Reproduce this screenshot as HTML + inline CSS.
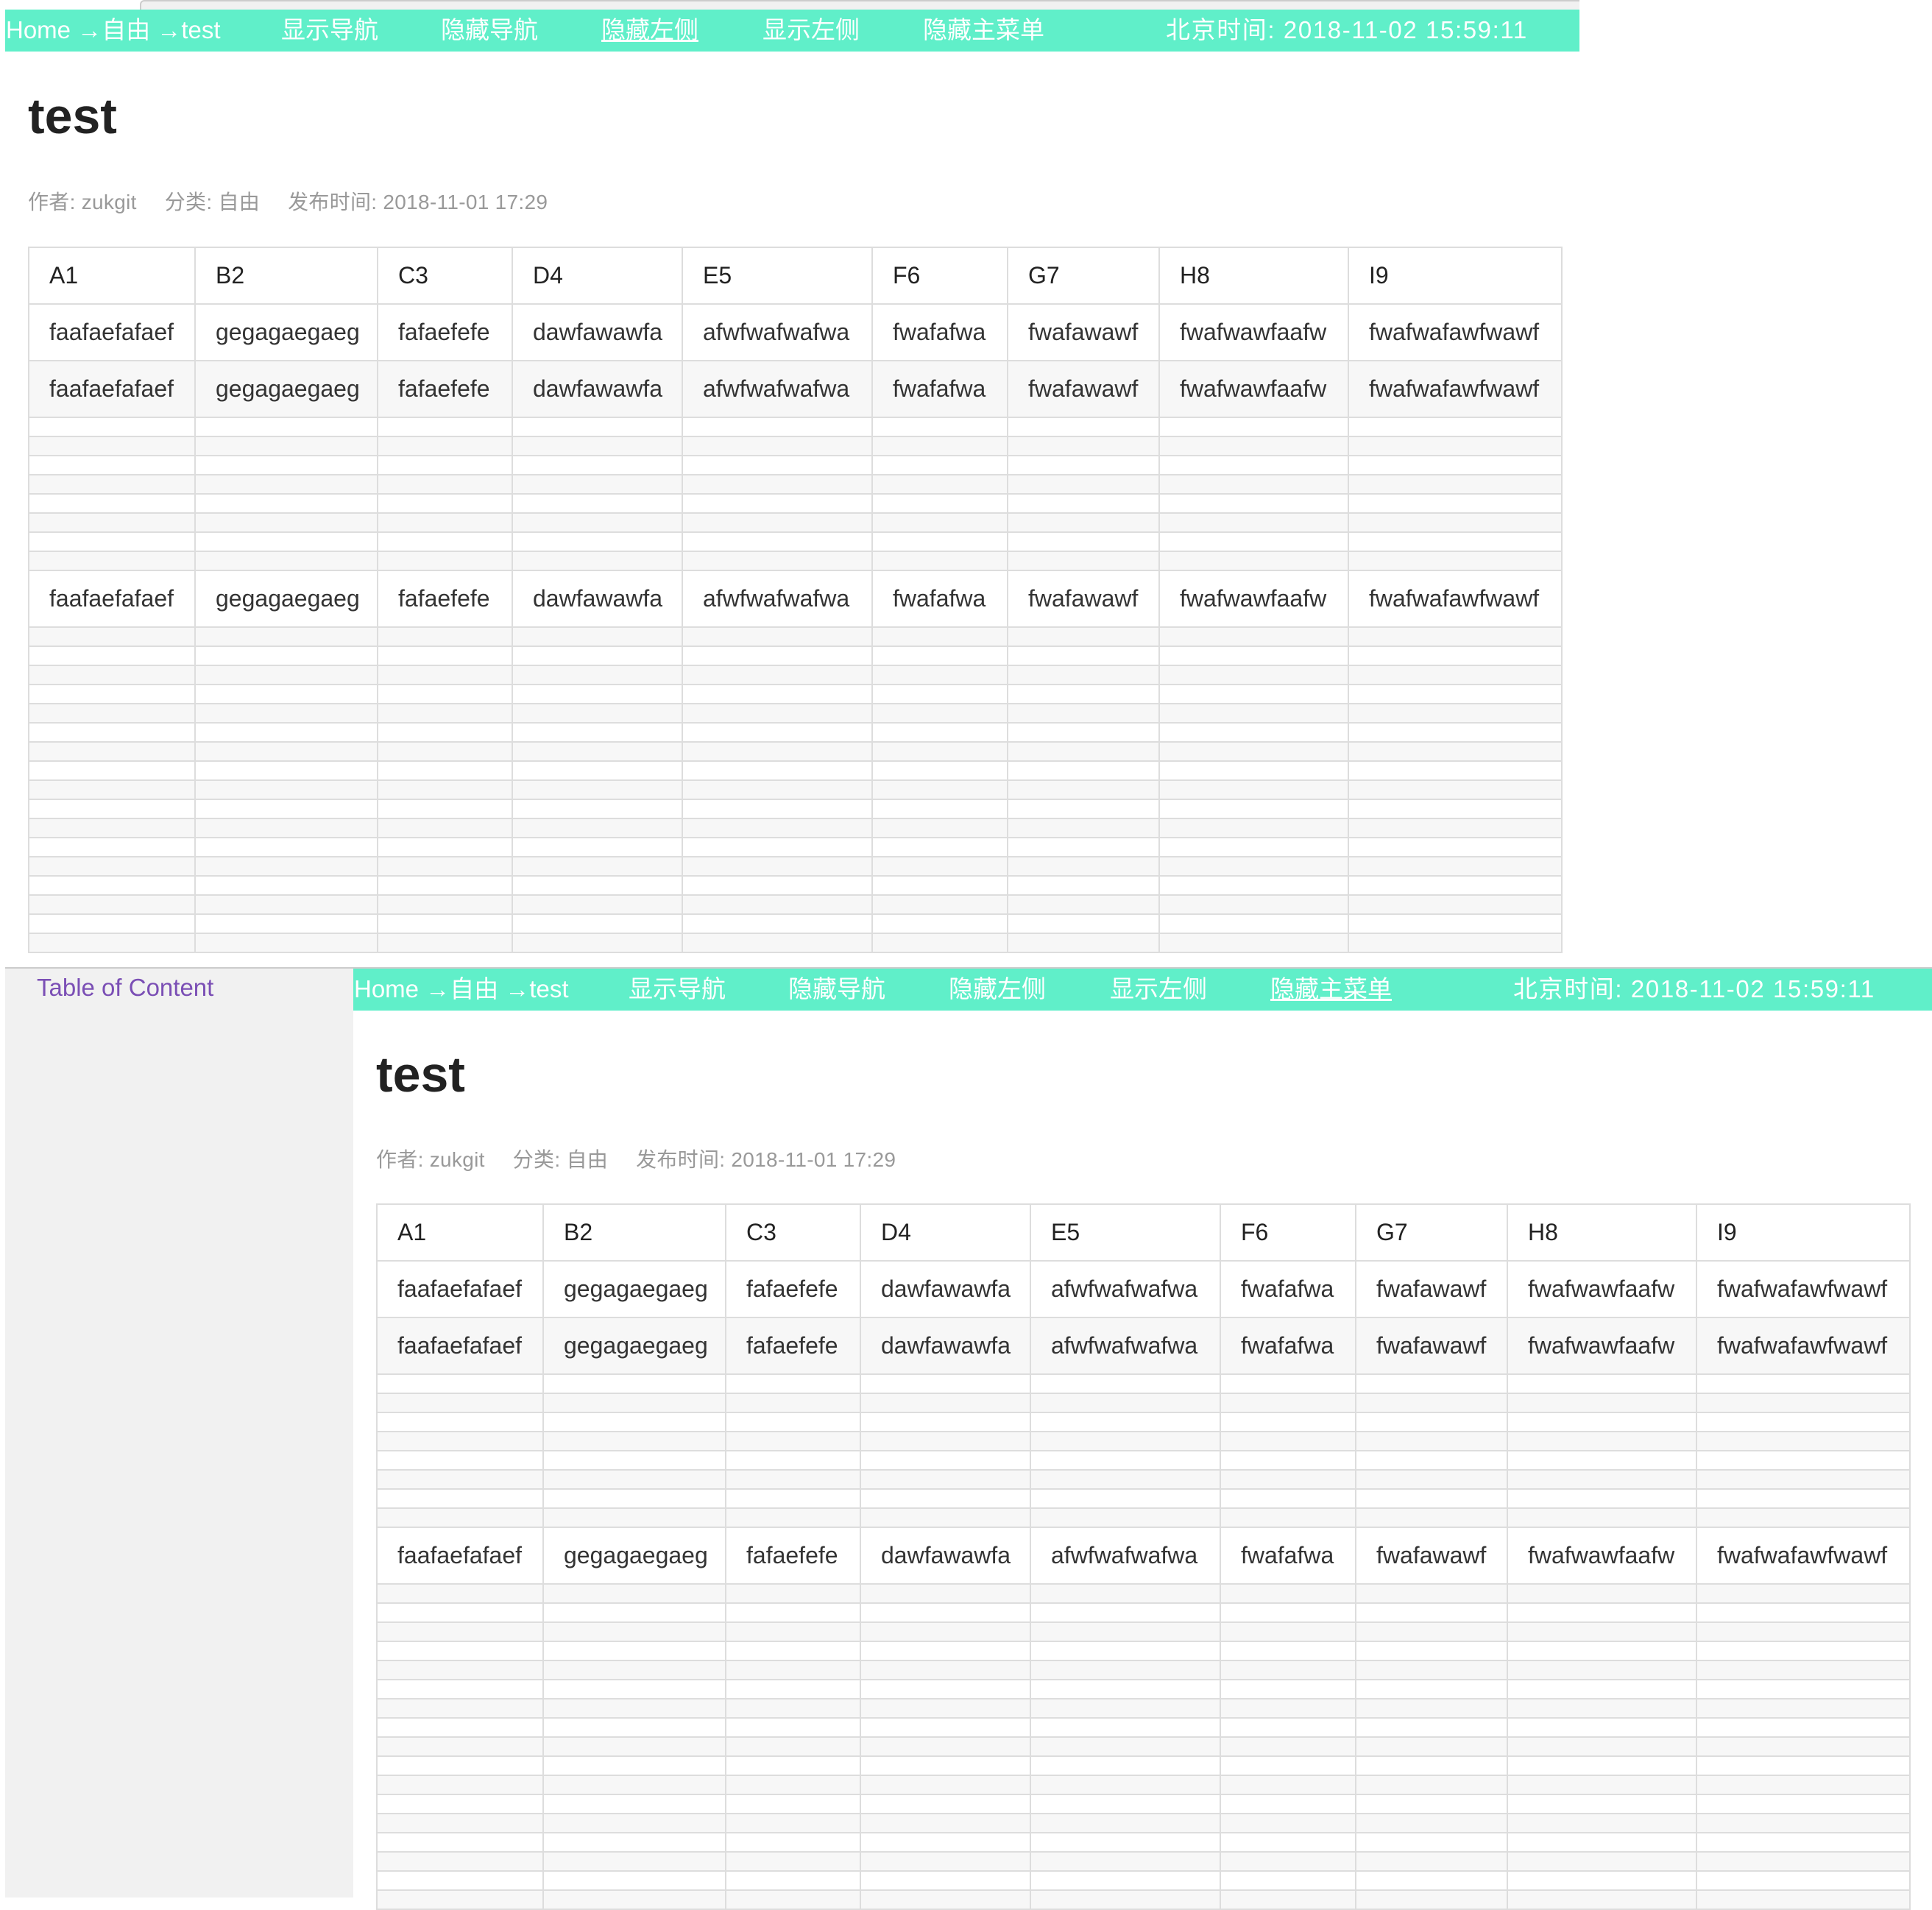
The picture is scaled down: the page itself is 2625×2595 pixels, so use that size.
<!DOCTYPE html>
<html><head><meta charset="utf-8">
<style>
*{margin:0;padding:0;box-sizing:border-box}
body{width:2625px;height:2578px;overflow:hidden;background:#fff;position:relative;font-family:"Liberation Sans","Noto Sans CJK SC",sans-serif;color:#333}
.topstrip{position:absolute;left:190px;top:0;width:1956px;height:14px;background:#f1f1f1;border-top:2px solid #ccc;border-left:2px solid #ccc;border-radius:6px 0 0 0}
.nav{position:absolute;height:57px;background:#60efc9;color:#fff;font-size:33px;white-space:nowrap}
.nav span{position:absolute;top:8px;line-height:40px;display:inline-block}
.nav span.u{text-decoration:underline}
.nav span.tm{letter-spacing:1.6px}
h1{position:absolute;font-size:68px;font-weight:bold;color:#222;line-height:1}
.meta{position:absolute;font-size:28px;color:#999;white-space:nowrap;letter-spacing:.3px}
.meta b{font-weight:normal;margin-right:38px}
table{position:absolute;border-collapse:collapse;table-layout:fixed}
td{border:2px solid #ddd;font-size:32px;padding:0 0 0 27px;height:77px;white-space:nowrap;overflow:hidden;color:#333}
tr:first-child td{color:#222}
tr.t td{height:26px;padding:0}
tr:nth-child(odd) td{background:#f7f7f7}
tr:first-child td{background:#fff}
.side{position:absolute;left:7px;top:1314px;width:473px;height:1264px;background:#f1f1f1;border-top:2px solid #ccc}
.toc{position:absolute;left:50px;top:1323px;font-size:33px;color:#7b4fb5}
.sep{position:absolute;left:7px;top:1314px;width:2618px;height:2px;background:#ccc}
</style></head><body>
<div class="topstrip"></div>
<div class="nav" style="left:7px;top:13px;width:2139px">
<span style="left:1px">Home →自由 →test</span>
<span style="left:375px">显示导航</span>
<span style="left:592px">隐藏导航</span>
<span class="u" style="left:810px">隐藏左侧</span>
<span style="left:1029px">显示左侧</span>
<span style="left:1247px">隐藏主菜单</span>
<span class="tm" style="left:1577px">北京时间: 2018-11-02 15:59:11</span>
</div>
<h1 style="left:38px;top:124px">test</h1>
<div class="meta" style="left:38px;top:253px"><b>作者: zukgit</b><b>分类: 自由</b><b>发布时间: 2018-11-01 17:29</b></div>
<table id="t1" style="left:38px;top:335px;width:2083px"></table>

<div class="sep"></div>
<div class="side"></div>
<div class="toc">Table of Content</div>
<div class="nav" style="left:480px;top:1316px;width:2145px">
<span style="left:1px">Home →自由 →test</span>
<span style="left:374px">显示导航</span>
<span style="left:591px">隐藏导航</span>
<span style="left:809px">隐藏左侧</span>
<span style="left:1028px">显示左侧</span>
<span class="u" style="left:1246px">隐藏主菜单</span>
<span class="tm" style="left:1576px">北京时间: 2018-11-02 15:59:11</span>
</div>
<h1 style="left:511px;top:1426px">test</h1>
<div class="meta" style="left:511px;top:1554px"><b>作者: zukgit</b><b>分类: 自由</b><b>发布时间: 2018-11-01 17:29</b></div>
<table id="t2" style="left:511px;top:1635px;width:2084px"></table>
<script>
var w=[226,248,183,231,258,184,206,257,290];
var h=["A1","B2","C3","D4","E5","F6","G7","H8","I9"];
var d=["faafaefafaef","gegagaegaeg","fafaefefe","dawfawawfa","afwfwafwafwa","fwafafwa","fwafawawf","fwafwawfaafw","fwafwafawfwawf"];
function row(a){return "<tr>"+a.map(function(x){return "<td>"+x+"</td>"}).join("")+"</tr>";}
function thin(){return "<tr class='t'>"+w.map(function(){return "<td></td>"}).join("")+"</tr>";}
var s="<colgroup>"+w.map(function(x){return "<col style='width:"+x+"px'>"}).join("")+"</colgroup>";
s+=row(h)+row(d)+row(d);
for(var i=0;i<8;i++)s+=thin();
s+=row(d);
for(var i=0;i<17;i++)s+=thin();
document.getElementById("t1").innerHTML=s;
document.getElementById("t2").innerHTML=s;
</script>
</body></html>
